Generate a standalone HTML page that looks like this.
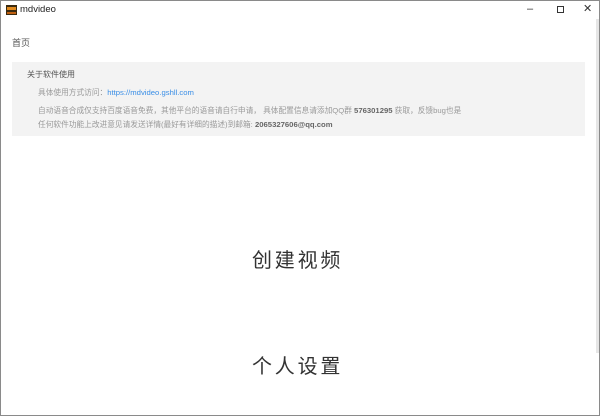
<!DOCTYPE html>
<html><head><meta charset="utf-8"><style>
*{margin:0;padding:0;box-sizing:border-box}
body{width:600px;height:416px;background:#fff;overflow:hidden;position:relative;font-family:"Liberation Sans","Noto Sans CJK SC",sans-serif;border:1px solid #8a8a8a}
.a{position:absolute;white-space:nowrap}
.s{font-size:7.7px;color:#999}
b{color:#666}
</style></head><body>
<div class="a" style="left:5px;top:4px;width:11px;height:10px;background:#3a2a10"><div style="margin:2px 1px;height:3px;background:#e08a20"></div><div style="margin:0 1px;height:2px;background:#c06010"></div></div>
<div class="a" style="left:19px;top:3px;font-size:9.5px;color:#222">mdvideo</div>
<div class="a" style="left:526px;top:2px;font-size:11px;color:#333">–</div>
<div class="a" style="left:556px;top:5px;width:7px;height:7px;border:1px solid #333"></div>
<div class="a" style="left:582px;top:1px;font-size:11px;color:#333">✕</div>
<div class="a" style="left:595px;top:18px;width:3px;height:334px;background:#e6e6e6"></div>
<div class="a" style="left:11px;top:35px;font-size:9px;color:#555">首页</div>
<div class="a" style="left:11px;top:61px;width:573px;height:74px;background:#f3f3f3"></div>
<div class="a" style="left:26px;top:68px;font-size:8px;color:#555">关于软件使用</div>
<div class="a s" style="left:37px;top:86px">具体使用方式访问：<span style="color:#3a8ee6">https://mdvideo.gshll.com</span></div>
<div class="a s" style="left:37px;top:104px">自动语音合成仅支持百度语音免费，其他平台的语音请自行申请， 具体配置信息请添加QQ群 <b>576301295</b> 获取，反馈bug也是</div>
<div class="a s" style="left:37px;top:118px">任何软件功能上改进意见请发送详情(最好有详细的描述)到邮箱: <b>2065327606@qq.com</b></div>
<div class="a" style="left:251px;top:243px;font-size:20px;letter-spacing:2.8px;color:#333">创建视频</div>
<div class="a" style="left:251px;top:349px;font-size:20px;letter-spacing:2.8px;color:#333">个人设置</div>
</body></html>
